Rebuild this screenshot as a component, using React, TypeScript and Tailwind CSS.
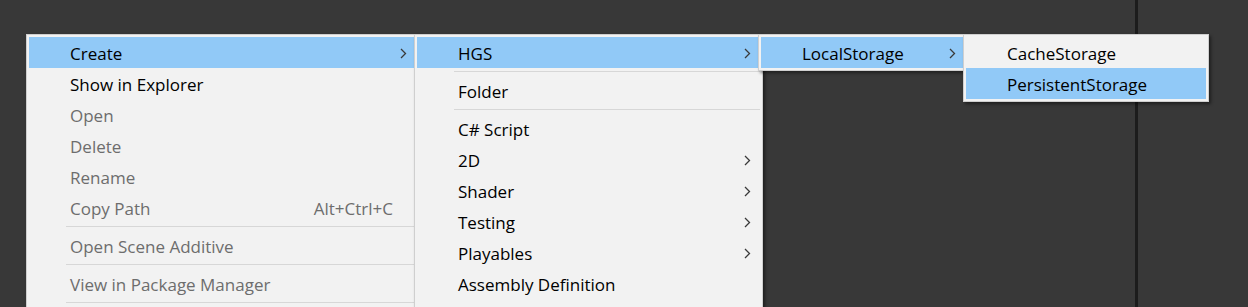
import React from 'react';

type Item =
  | { kind: 'sep' }
  | { kind: 'item'; label: string; sub?: boolean; disabled?: boolean; active?: boolean; shortcut?: string };

const it = (label: string, opts: Partial<Omit<Extract<Item, { kind: 'item' }>, 'kind' | 'label'>> = {}): Item => ({
  kind: 'item',
  label,
  ...opts,
});
const sep: Item = { kind: 'sep' };

const mainMenu: Item[] = [
  it('Create', { sub: true, active: true }),
  it('Show in Explorer'),
  it('Open', { disabled: true }),
  it('Delete', { disabled: true }),
  it('Rename', { disabled: true }),
  it('Copy Path', { disabled: true, shortcut: 'Alt+Ctrl+C' }),
  sep,
  it('Open Scene Additive', { disabled: true }),
  sep,
  it('View in Package Manager', { disabled: true }),
  sep,
];

const createMenu: Item[] = [
  it('HGS', { sub: true, active: true }),
  sep,
  it('Folder'),
  sep,
  it('C# Script'),
  it('2D', { sub: true }),
  it('Shader', { sub: true }),
  it('Testing', { sub: true }),
  it('Playables', { sub: true }),
  it('Assembly Definition'),
];

const hgsMenu: Item[] = [it('LocalStorage', { sub: true, active: true })];

const storageMenu: Item[] = [it('CacheStorage'), it('PersistentStorage', { active: true })];

function Chevron() {
  return (
    <svg width="7" height="11" viewBox="0 0 7 11" className="shrink-0">
      <path d="M1 1l4.5 4.5L1 10" fill="none" stroke="#3a3a3a" strokeWidth="1.3" />
    </svg>
  );
}

function Menu({ items, className }: { items: Item[]; className: string }) {
  return (
    <div
      className={`absolute border border-[#cfcfcf] bg-[#f2f2f2] p-[2px] shadow-[2px_2px_3px_rgba(0,0,0,0.45)] ${className}`}
    >
      {items.map((item, i) =>
        item.kind === 'sep' ? (
          <div key={i} className="py-[3px] pl-[37px]">
            <div className="h-px bg-[#d7d7d7]" />
          </div>
        ) : (
          <div
            key={i}
            className={`flex h-[31px] items-center pl-[41px] pr-[9px] pt-px ${
              item.active ? 'bg-[#91c9f7]' : ''
            }`}
          >
            <span className={`flex-1 whitespace-nowrap ${item.disabled ? 'text-[#6d6d6d]' : 'text-black'}`}>
              {item.label}
            </span>
            {item.shortcut && <span className="mr-[14px] text-[#6d6d6d]">{item.shortcut}</span>}
            {item.sub && <Chevron />}
          </div>
        )
      )}
    </div>
  );
}

export default function App() {
  return (
    <div
      className="relative h-[307px] w-[1248px] overflow-hidden bg-[#383838] text-[17px] leading-none"
      style={{ fontFamily: '"Open Sans", "Noto Sans", sans-serif' }}
    >
      {/* panel divider behind the menus */}
      <div className="absolute left-[1135px] top-0 h-full w-[3px] bg-[#1c1c1c]" />

      <Menu items={mainMenu} className="left-[26px] top-[34px] h-[300px] w-[393px]" />
      <Menu items={createMenu} className="left-[414px] top-[34px] h-[300px] w-[349px]" />
      <Menu items={hgsMenu} className="left-[758px] top-[34px] w-[210px]" />
      <Menu items={storageMenu} className="left-[963px] top-[34px] w-[246px]" />
    </div>
  );
}
